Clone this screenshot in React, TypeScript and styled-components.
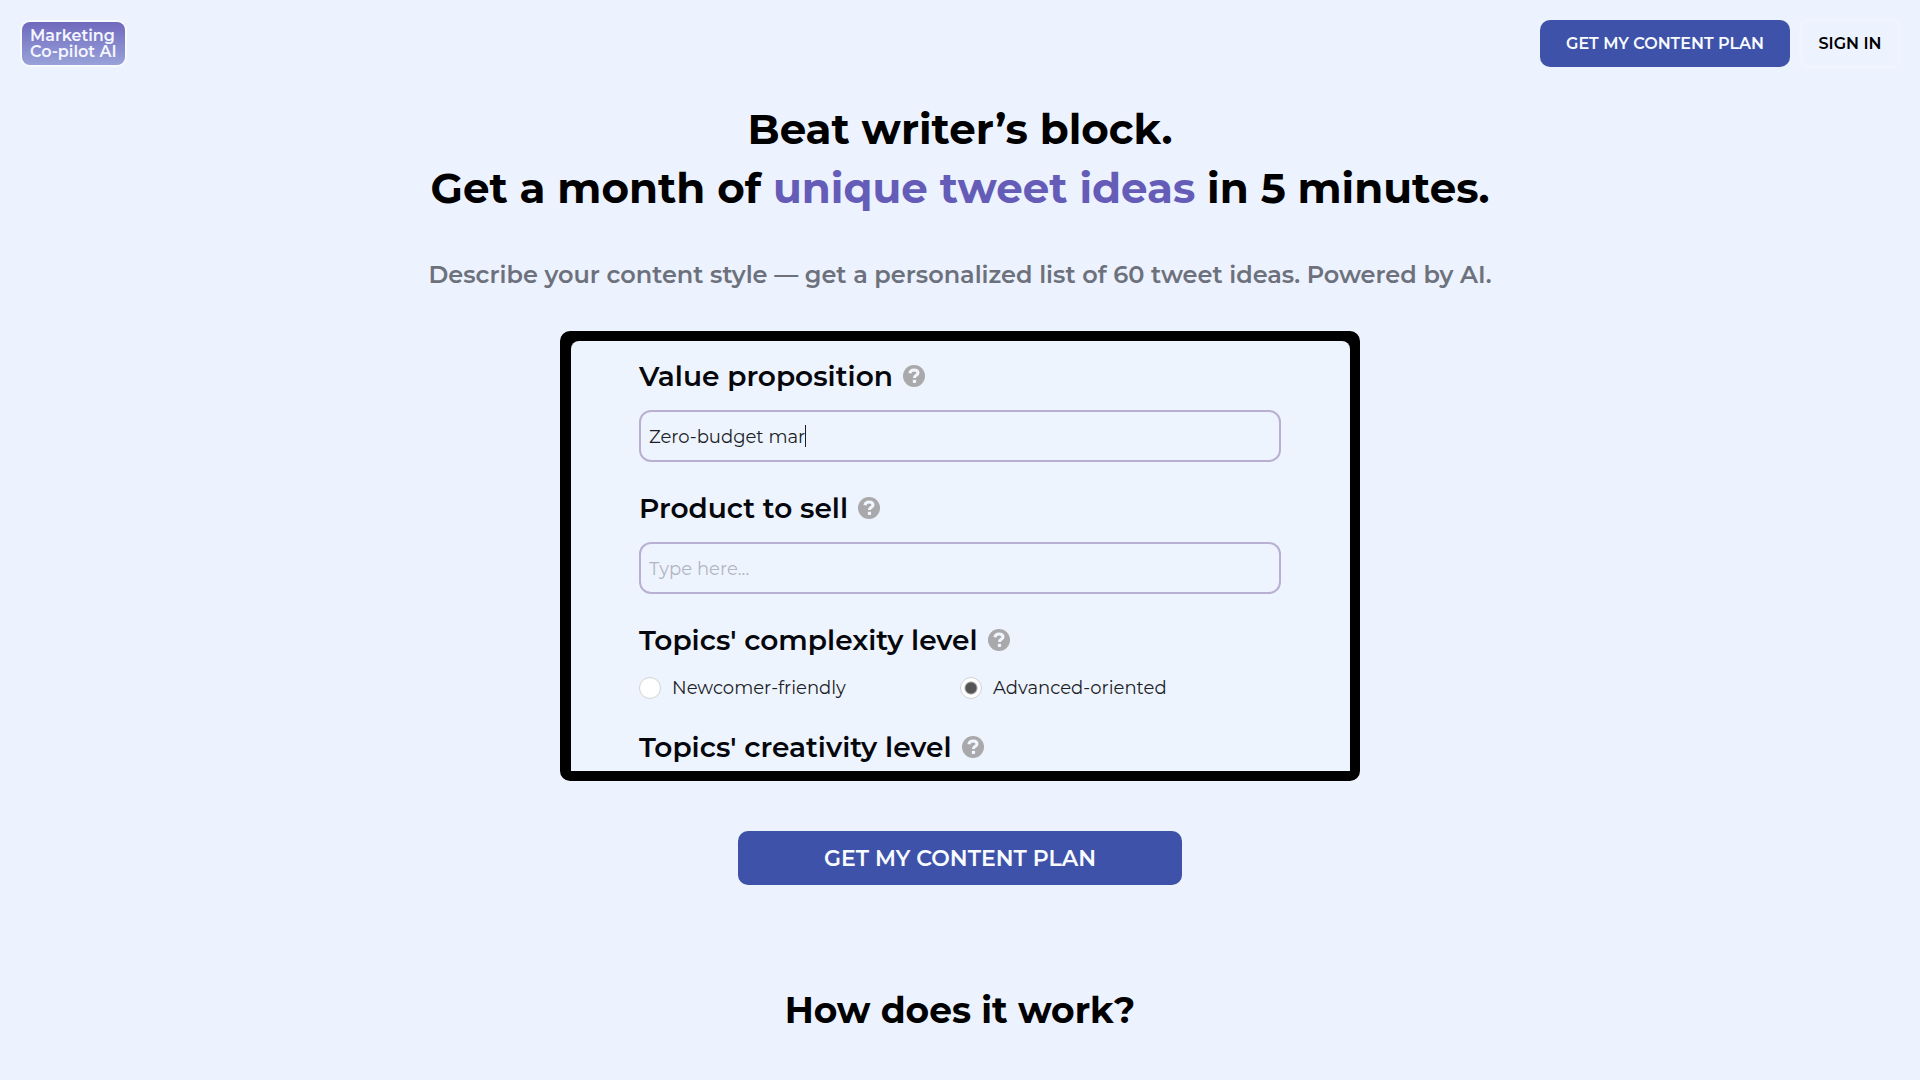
import React, { useLayoutEffect, useRef, useState } from "react";
import styled, { createGlobalStyle } from "styled-components";

const GlobalStyle = createGlobalStyle`
  *, *::before, *::after { box-sizing: border-box; }
  body {
    margin: 0;
    background: #ecf2fe;
    color: #000;
    font-family: Montserrat, Inter, "Liberation Sans", sans-serif;
  }
  h1, h2, p { margin: 0; }
  button, input { font-family: inherit; }
`;

const Page = styled.div`
  min-height: 100vh;
  overflow: hidden;
`;

const Header = styled.header`
  display: flex;
  justify-content: space-between;
  align-items: center;
  padding: 18px 19px 0 22px;
`;

const Logo = styled.a`
  padding: 6px 8px 5px;
  border-radius: 8px;
  background: linear-gradient(#7069bd, #98a2d9);
  box-shadow: 0 0 0 2px #f7faff;
  color: #f4f6ff;
  font-size: 16px;
  font-weight: 600;
  line-height: 16px;
  text-decoration: none;
  white-space: nowrap;
`;

const Nav = styled.nav`
  display: flex;
  align-items: center;
  gap: 9px;
`;

const PrimaryButton = styled.button<{ $large?: boolean }>`
  width: ${(p) => (p.$large ? "444px" : "250px")};
  height: ${(p) => (p.$large ? "54px" : "47px")};
  padding: 0;
  border: 0;
  border-radius: 10px;
  background: #3e52a9;
  color: #f8fbff;
  font-size: ${(p) => (p.$large ? "22px" : "16px")};
  font-weight: 600;
  cursor: pointer;
`;

const SignInButton = styled.button`
  width: 102px;
  height: 51px;
  padding: 0;
  border: 4px solid #eff4ff;
  border-radius: 10px;
  background: transparent;
  color: #000;
  font-size: 16px;
  font-weight: 600;
  cursor: pointer;
`;

const Main = styled.main`
  display: flex;
  flex-direction: column;
  align-items: center;
  padding-top: 31px;
  text-align: center;
`;

const Headline = styled.h1`
  font-size: 42px;
  font-weight: 700;
  line-height: 59px;
`;

const Accent = styled.span`
  color: #655cb8;
`;

const Subtitle = styled.p`
  padding-top: 40px;
  color: #6d717c;
  font-size: 24px;
  font-weight: 600;
  line-height: 34px;
`;

const Preview = styled.form`
  display: flex;
  flex-direction: column;
  width: 800px;
  max-width: 100%;
  height: 450px;
  margin: 39px 0 50px;
  padding: 18px 69px 0 68px;
  overflow: hidden;
  border: 10px solid #000;
  border-left-width: 11px;
  border-radius: 10px;
  background: #000;
  position: relative;
  isolation: isolate;
  text-align: left;

  &::before {
    content: "";
    position: absolute;
    inset: 0;
    z-index: -1;
    border-radius: 8px 8px 0 0;
    background: #eef4fe;
  }
`;

const TitleRow = styled.div`
  display: flex;
  align-items: center;
  gap: 10px;
  height: 34px;
`;

const titleText = `
  font-size: 28px;
  font-weight: 600;
  line-height: 34px;
  color: #05070c;
`;

const FieldTitle = styled.label`
  ${titleText}
`;

const GroupTitle = styled.span`
  ${titleText}
`;

const HelpIcon = styled.svg`
  width: 22px;
  height: 22px;
  flex: none;
`;

const InputWrap = styled.div`
  position: relative;
  margin: 17px 0 29px;
`;

const TextInput = styled.input`
  display: block;
  width: 100%;
  height: 52px;
  padding: 1px 8px 0;
  border: 2px solid #b9afd2;
  border-radius: 12px;
  outline: none;
  background: transparent;
  color: #1b1e27;
  font-size: 18px;
  caret-color: transparent;

  &::placeholder {
    color: #b1b6c2;
    opacity: 1;
  }
`;

const Caret = styled.span`
  position: absolute;
  top: 15px;
  width: 1px;
  height: 22px;
  background: #1b1e27;
`;

const RadioRow = styled.div`
  display: grid;
  grid-template-columns: 1fr 1fr;
  margin: 19px 0 31px;
`;

const RadioLabel = styled.label`
  display: flex;
  align-items: center;
  gap: 11px;
  height: 23px;
  color: #1b1e27;
  font-size: 18px;
  line-height: 24px;
`;

const Radio = styled.input`
  appearance: none;
  width: 22px;
  height: 22px;
  margin: 0;
  border: 1px solid #d2d2d6;
  border-radius: 50%;
  background: #fff;

  &:checked {
    background: radial-gradient(circle, #555 0 5px, #fff 7px);
  }
`;

const SectionTitle = styled.h2`
  padding-top: 103px;
  font-size: 36px;
  font-weight: 700;
  line-height: 44px;
`;

function Help() {
  return (
    <HelpIcon viewBox="0 0 22 22" aria-hidden="true">
      <circle cx="11" cy="11" r="11" fill="#a9a9ac" />
      <path
        d="M6.900 8.200C7.200 5.900 8.900 4.900 11.100 4.900c2.500 0 3.900 1.300 3.900 3 0 2.400-3.600 2.400-3.600 5"
        fill="none"
        stroke="#f1f5fd"
        strokeWidth="3"
      />
      <rect x="9.800" y="14.800" width="3.300" height="3.200" rx="0.800" fill="#f1f5fd" />
    </HelpIcon>
  );
}

interface TextFieldProps {
  id: string;
  title: string;
  initial?: string;
  active?: boolean;
}

function TextField({ id, title, initial = "", active }: TextFieldProps) {
  const [value, setValue] = useState(initial);
  const [caretX, setCaretX] = useState(10);
  const input = useRef<HTMLInputElement>(null);

  useLayoutEffect(() => {
    const context = document.createElement("canvas").getContext("2d");
    if (!input.current || !context) return;
    const style = getComputedStyle(input.current);
    context.font = `${style.fontWeight} ${style.fontSize} ${style.fontFamily}`;
    setCaretX(10 + Math.round(context.measureText(value).width));
  }, [value]);

  return (
    <>
      <TitleRow>
        <FieldTitle htmlFor={id}>{title}</FieldTitle>
        <Help />
      </TitleRow>
      <InputWrap>
        <TextInput
          id={id}
          ref={input}
          type="text"
          placeholder="Type here..."
          value={value}
          onChange={(e) => setValue(e.target.value)}
        />
        {active && <Caret style={{ left: caretX }} />}
      </InputWrap>
    </>
  );
}

export default function App() {
  return (
    <Page>
      <GlobalStyle />
      <Header>
        <Logo href="#">
          Marketing
          <br />
          Co-pilot AI
        </Logo>
        <Nav>
          <PrimaryButton type="button">GET MY CONTENT PLAN</PrimaryButton>
          <SignInButton type="button">SIGN IN</SignInButton>
        </Nav>
      </Header>
      <Main>
        <Headline>
          Beat writer’s block.
          <br />
          Get a month of <Accent>unique tweet ideas</Accent> in 5 minutes.
        </Headline>
        <Subtitle>
          Describe your content style — get a personalized list of 60 tweet ideas. Powered by AI.
        </Subtitle>
        <Preview>
          <TextField id="value" title="Value proposition" initial="Zero-budget mar" active />
          <TextField id="product" title="Product to sell" />
          <TitleRow>
            <GroupTitle id="complexity">Topics' complexity level</GroupTitle>
            <Help />
          </TitleRow>
          <RadioRow role="radiogroup" aria-labelledby="complexity">
            <RadioLabel>
              <Radio type="radio" name="complexity" />
              Newcomer-friendly
            </RadioLabel>
            <RadioLabel>
              <Radio type="radio" name="complexity" defaultChecked />
              Advanced-oriented
            </RadioLabel>
          </RadioRow>
          <TitleRow>
            <GroupTitle>Topics' creativity level</GroupTitle>
            <Help />
          </TitleRow>
        </Preview>
        <PrimaryButton type="button" $large>
          GET MY CONTENT PLAN
        </PrimaryButton>
        <SectionTitle>How does it work?</SectionTitle>
      </Main>
    </Page>
  );
}
